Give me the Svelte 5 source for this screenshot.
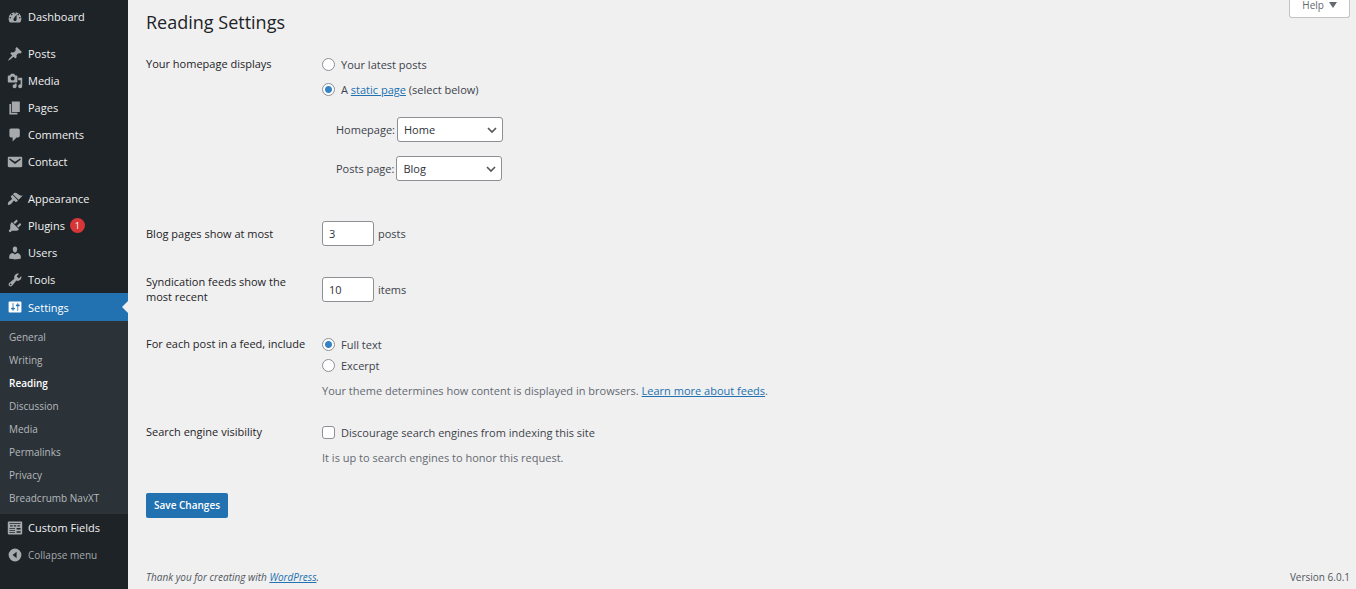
<script lang="ts">
	type MenuItem = {
		label: string;
		icon: string;
		count?: number;
		current?: boolean;
		gap?: boolean;
	};

	const icons: Record<string, string> = {
		dashboard: 'M3.76 17h12.48A7.98 7.98 0 0 0 18 12a8 8 0 0 0-16 0c0 1.9.66 3.65 1.76 5zM10 4c.55 0 1 .45 1 1s-.45 1-1 1-1-.45-1-1 .45-1 1-1zM6 6c.55 0 1 .45 1 1s-.45 1-1 1-1-.45-1-1 .45-1 1-1zm8 0c.55 0 1 .45 1 1s-.45 1-1 1-1-.45-1-1 .45-1 1-1zm-5.37 5.55L12 7v6c0 1.1-.9 2-2 2s-2-.9-2-2c0-.57.24-1.08.63-1.45zM4 10c.55 0 1 .45 1 1s-.45 1-1 1-1-.45-1-1 .45-1 1-1zm12 0c.55 0 1 .45 1 1s-.45 1-1 1-1-.45-1-1 .45-1 1-1z',
		post: 'M10.44 3.02l1.82-1.82 6.36 6.35-1.83 1.82c-1.05-.68-2.48-.57-3.41.36l-.75.75c-.92.93-1.04 2.35-.35 3.41l-1.83 1.82-2.41-2.41-2.8 2.79c-.42.42-3.38 2.71-3.8 2.29s1.86-3.39 2.28-3.81l2.79-2.79L4.1 9.36l1.83-1.82c1.05.69 2.48.57 3.4-.36l.75-.75c.93-.92 1.05-2.35.36-3.41z',
		media: 'M13 11V4c0-.55-.45-1-1-1h-1.67L9 1H5L3.67 3H2c-.55 0-1 .45-1 1v7c0 .55.45 1 1 1h10c.55 0 1-.45 1-1zM7 4.5c1.38 0 2.5 1.12 2.5 2.5S8.38 9.5 7 9.5 4.5 8.38 4.5 7 5.62 4.5 7 4.5zM14 6h5v10.5c0 1.38-1.12 2.5-2.5 2.5S14 17.88 14 16.5s1.12-2.5 2.5-2.5c.17 0 .34.02.5.05V9h-3V6zm-4 8.05V13h2v3.5c0 1.38-1.12 2.5-2.5 2.5S7 17.88 7 16.5 8.12 14 9.5 14c.17 0 .34.02.5.05z',
		page: 'M6 15V2h10v13H6zm-1 1h8v2H3V5h2v11z',
		comments: 'M5 2h9c1.1 0 2 .9 2 2v7c0 1.1-.9 2-2 2h-2l-5 5v-5H5c-1.1 0-2-.9-2-2V4c0-1.1.9-2 2-2z',
		email: 'M2.5 3.5h15c.8 0 1.5.7 1.5 1.5v10c0 .8-.7 1.5-1.5 1.5h-15C1.7 16.5 1 15.8 1 15V5c0-.8.7-1.5 1.5-1.5zm7.5 9.1l6.9-5.5c.3-.3.4-.7.1-1.1-.3-.4-.8-.4-1.2-.2L10 9.7 4.2 5.8c-.4-.2-.9-.2-1.2.2-.3.4-.2.8.1 1.1z',
		appearance: 'M14.48 11.06L7.41 3.99l1.5-1.5c.5-.56 2.3-.47 3.51.32 1.21.8 1.43 1.28 2.91 2.1 1.18.64 2.45 1.26 4.45.85zm-.71.71L6.7 4.7 4.93 6.47c-.39.39-.39 1.02 0 1.41l1.06 1.06c.39.39.39 1.03 0 1.42-.6.6-1.43 1.11-2.21 1.69-.35.26-.7.53-1.01.84C1.43 14.23.4 16.08 1.4 17.07c.99 1 2.84-.03 4.18-1.36.31-.31.58-.66.85-1.02.57-.78 1.08-1.61 1.69-2.21.39-.39 1.02-.39 1.41 0l1.06 1.06c.39.39 1.02.39 1.41 0z',
		plugins: 'M13.11 4.36L9.87 7.6 8 5.73l3.24-3.24c.35-.34 1.05-.2 1.56.32.52.51.66 1.21.31 1.55zm-8 1.77l.91-1.12 9.01 9.01-1.19.84c-.71.71-2.63 1.16-3.82 1.16H6.14L4.9 17.26c-.59.59-1.54.59-2.12 0-.59-.58-.59-1.53 0-2.12l1.24-1.24v-3.88c0-1.13.4-3.19 1.09-3.89zm7.26 3.97l3.24-3.24c.34-.35 1.04-.21 1.55.31.52.51.66 1.21.31 1.55l-3.24 3.25z',
		users: 'M10 9.25c-2.27 0-2.73-3.44-2.73-3.44C7 4.02 7.82 2 9.97 2c2.16 0 2.98 2.02 2.71 3.81 0 0-.41 3.44-2.68 3.44zm0 2.57L12.72 10c2.39 0 4.52 2.33 4.52 4.53v2.49s-3.65 1.13-7.24 1.13c-3.65 0-7.24-1.13-7.24-1.13v-2.49c0-2.25 1.94-4.48 4.47-4.48z',
		tools: 'M16.68 9.77c-1.34 1.34-3.3 1.67-4.95.99l-5.41 6.52c-.99.99-2.59.99-3.58 0s-.99-2.59 0-3.57l6.52-5.42c-.68-1.65-.35-3.61.99-4.95 1.28-1.28 3.12-1.62 4.72-1.06l-2.89 2.89 2.82 2.82 2.86-2.87c.53 1.58.18 3.39-1.08 4.65zM3.81 16.21c.4.39 1.04.39 1.43 0 .4-.4.4-1.04 0-1.43-.39-.4-1.03-.4-1.43 0-.39.39-.39 1.03 0 1.43z',
		settings: 'M18 16V4c0-.55-.45-1-1-1H3c-.55 0-1 .45-1 1v12c0 .55.45 1 1 1h14c.55 0 1-.45 1-1zM8 11h1c.55 0 1 .45 1 1s-.45 1-1 1H8v1.5c0 .28-.22.5-.5.5s-.5-.22-.5-.5V13H6c-.55 0-1-.45-1-1s.45-1 1-1h1V5.5c0-.28.22-.5.5-.5s.5.22.5.5V11zm5-2h-1c-.55 0-1-.45-1-1s.45-1 1-1h1V5.5c0-.28.22-.5.5-.5s.5.22.5.5V7h1c.55 0 1 .45 1 1s-.45 1-1 1h-1v5.5c0 .28-.22.5-.5.5s-.5-.22-.5-.5V9z',
		fields: 'M2 2h16c.55 0 1 .45 1 1v14c0 .55-.45 1-1 1H2c-.55 0-1-.45-1-1V3c0-.55.45-1 1-1zM3 4v1h14V4zM4 6.5v1.500h3V6.500zM8.500 6.500v1.500h3V6.500zM13 6.500v1.500h3V6.500zM3 10v1h7v-1zM3 12.500v1h7v-1zM3 15v1h7v-1zM12 10v2h5v-2zM12 14v2h5v-2z',
		collapse: 'M10 2a8 8 0 1 0 0 16 8 8 0 0 0 0-16zm2 4v8l-5-4z',
	};

	const menu: MenuItem[] = [
		{ label: 'Dashboard', icon: 'dashboard' },
		{ label: 'Posts', icon: 'post', gap: true },
		{ label: 'Media', icon: 'media' },
		{ label: 'Pages', icon: 'page' },
		{ label: 'Comments', icon: 'comments' },
		{ label: 'Contact', icon: 'email' },
		{ label: 'Appearance', icon: 'appearance', gap: true },
		{ label: 'Plugins', icon: 'plugins', count: 1 },
		{ label: 'Users', icon: 'users' },
		{ label: 'Tools', icon: 'tools' },
		{ label: 'Settings', icon: 'settings', current: true },
		{ label: 'Custom Fields', icon: 'fields' },
	];

	const submenu = ['General', 'Writing', 'Reading', 'Discussion', 'Media', 'Permalinks', 'Privacy', 'Breadcrumb NavXT'];

	let showOnFront = $state('page');
	let homepage = $state('Home');
	let postsPage = $state('Blog');
	let postsPerPage = $state('3');
	let postsPerRss = $state('10');
	let feedContent = $state('full');
	let discourage = $state(false);
</script>

{#snippet icon(name: string)}
	<svg class="icon" viewBox="0 0 20 20" aria-hidden="true">
		<path d={icons[name]} fill="currentColor" fill-rule="evenodd" />
	</svg>
{/snippet}

<div class="admin">
	<nav class="sidebar" aria-label="Main menu">
		<ul class="menu">
			{#each menu as item}
				<li class:gap={item.gap}>
					<a class="menu-link" class:current={item.current} href="#{item.icon}">
						{@render icon(item.icon)}
						<span>{item.label}</span>
						{#if item.count}
							<span class="count">{item.count}</span>
						{/if}
					</a>
					{#if item.current}
						<ul class="submenu">
							{#each submenu as name}
								<li><a class:active={name === 'Reading'} href="#{name}">{name}</a></li>
							{/each}
						</ul>
					{/if}
				</li>
			{/each}
		</ul>
		<button class="collapse" type="button">
			{@render icon('collapse')}
			<span>Collapse menu</span>
		</button>
	</nav>

	<div class="content">
		<header>
			<h1>Reading Settings</h1>
			<button class="help" type="button">Help <span class="caret"></span></button>
		</header>

		<form onsubmit={(e) => e.preventDefault()}>
			<div class="row front">
				<div class="label" id="front-label">Your homepage displays</div>
				<div class="field" role="radiogroup" aria-labelledby="front-label">
					<label class="choice">
						<input type="radio" name="front" value="posts" bind:group={showOnFront} />
						Your latest posts
					</label>
					<div class="choice">
						<input id="front-page" type="radio" name="front" value="page" bind:group={showOnFront} />
						<label for="front-page">A <a href="#pages">static page</a> (select below)</label>
					</div>
					<div class="pages">
						<div class="pick">
							<label for="homepage">Homepage:</label>
							<select id="homepage" bind:value={homepage}>
								<option>Home</option>
								<option>Blog</option>
							</select>
						</div>
						<div class="pick">
							<label for="posts-page">Posts page:</label>
							<select id="posts-page" bind:value={postsPage}>
								<option>Home</option>
								<option>Blog</option>
							</select>
						</div>
					</div>
				</div>
			</div>

			<div class="row number">
				<label class="label" for="per-page">Blog pages show at most</label>
				<div class="field amount">
					<input id="per-page" type="text" inputmode="numeric" bind:value={postsPerPage} />
					<span>posts</span>
				</div>
			</div>

			<div class="row number">
				<label class="label" for="per-rss">Syndication feeds show the most recent</label>
				<div class="field amount">
					<input id="per-rss" type="text" inputmode="numeric" bind:value={postsPerRss} />
					<span>items</span>
				</div>
			</div>

			<div class="row feed">
				<div class="label" id="feed-label">For each post in a feed, include</div>
				<div class="field" role="radiogroup" aria-labelledby="feed-label">
					<label class="choice">
						<input type="radio" name="feed" value="full" bind:group={feedContent} />
						Full text
					</label>
					<label class="choice">
						<input type="radio" name="feed" value="excerpt" bind:group={feedContent} />
						Excerpt
					</label>
					<p>Your theme determines how content is displayed in browsers. <a href="#feeds">Learn more about feeds</a>.</p>
				</div>
			</div>

			<div class="row">
				<div class="label">Search engine visibility</div>
				<div class="field">
					<label class="choice">
						<input type="checkbox" bind:checked={discourage} />
						Discourage search engines from indexing this site
					</label>
					<p>It is up to search engines to honor this request.</p>
				</div>
			</div>

			<button class="save" type="submit">Save Changes</button>
		</form>

		<footer>
			<em>Thank you for creating with <a href="#wordpress">WordPress</a>.</em>
			<span>Version 6.0.1</span>
		</footer>
	</div>
</div>

<style>
	:global(body) {
		background: #f0f0f0;
	}
	.admin {
		display: flex;
		min-height: 100vh;
		background: #f0f0f0;
		color: #3c434a;
		font: 11px/15px 'Open Sans', 'Noto Sans', sans-serif;
	}
	.admin * {
		box-sizing: border-box;
	}
	ul {
		list-style: none;
		margin: 0;
		padding: 0;
	}
	button,
	input,
	select {
		font: inherit;
		margin: 0;
	}
	a {
		color: #2271b1;
	}

	.sidebar {
		flex: none;
		width: 128px;
		padding-top: 3px;
		background: #1d2327;
	}
	.gap {
		margin-top: 10px;
	}
	.menu-link,
	.collapse {
		display: flex;
		align-items: center;
		gap: 5px;
		width: 100%;
		height: 27px;
		padding: 0 0 0 7px;
		color: #f0f0f1;
		text-decoration: none;
	}
	.icon {
		flex: none;
		width: 16px;
		height: 16px;
		color: #a7aaad;
	}
	.count {
		min-width: 15px;
		border-radius: 8px;
		background: #d63638;
		color: #fff;
		font-size: 9px;
		text-align: center;
	}
	.current {
		position: relative;
		height: 28px;
		background: #2271b1;
		color: #fff;
	}
	.current .icon {
		color: #fff;
	}
	.current::after {
		content: '';
		position: absolute;
		top: 8px;
		right: 0;
		border: 6px solid transparent;
		border-left-width: 0;
		border-right-color: #f0f0f0;
	}
	.submenu {
		padding: 5px 0 4px;
		background: #2c3338;
	}
	.submenu a {
		display: block;
		padding-left: 9px;
		color: #b4b9be;
		font-size: 10px;
		line-height: 23px;
		text-decoration: none;
	}
	.submenu .active {
		color: #fff;
		font-weight: 600;
	}
	.collapse {
		height: 28px;
		border: 0;
		background: none;
		color: #a7aaad;
		font-size: 10px;
	}

	.content {
		flex: 1;
		display: flex;
		flex-direction: column;
		padding: 0 6px 4px 18px;
	}
	header {
		display: flex;
		justify-content: space-between;
		align-items: flex-start;
	}
	h1 {
		margin: 0;
		padding-top: 8px;
		color: #1d2327;
		font-size: 18px;
		font-weight: 400;
		line-height: 28px;
	}
	.help {
		display: flex;
		align-items: center;
		gap: 5px;
		height: 18px;
		padding: 0 12px 8px;
		border: 1px solid #c3c4c7;
		border-top: 0;
		border-radius: 0 0 3px 3px;
		background: #fff;
		color: #646970;
		font-size: 10px;
		line-height: 10px;
	}
	.caret {
		border: 4px solid transparent;
		border-top: 6px solid #646970;
		border-bottom: 0;
	}

	form {
		display: flex;
		flex-direction: column;
		padding-top: 20px;
	}
	.row {
		display: grid;
		grid-template-columns: 160px 1fr;
		column-gap: 16px;
	}
	.front {
		min-height: 162px;
	}
	.number {
		align-items: center;
		min-height: 30px;
		margin-bottom: 26px;
	}
	.feed {
		min-height: 94px;
		padding-top: 6px;
	}
	.label {
		color: #1d2327;
		font-weight: 500;
	}
	.choice {
		display: flex;
		align-items: center;
		gap: 6px;
		width: fit-content;
		height: 17px;
	}
	.choice + .choice {
		margin-top: 4px;
	}
	.front .choice + .choice {
		margin-top: 8px;
	}
	input,
	select {
		border: 1px solid #8c8f94;
		border-radius: 3px;
		background-color: #fff;
		color: #2c3338;
	}
	input[type='radio'],
	input[type='checkbox'] {
		appearance: none;
		flex: none;
		width: 13px;
		height: 13px;
	}
	input[type='radio'] {
		border-radius: 50%;
	}
	input[type='radio']:checked {
		background-image: radial-gradient(circle, #3582c4 3px, transparent 4px);
	}
	input[type='checkbox']:checked {
		background-color: #3582c4;
	}
	.pages {
		display: flex;
		flex-direction: column;
		gap: 14px;
		padding: 19px 0 0 14px;
	}
	.pick {
		display: flex;
		align-items: center;
		gap: 2px;
	}
	select {
		appearance: none;
		width: 106px;
		height: 25px;
		padding: 0 20px 0 6px;
		background-image: url("data:image/svg+xml,%3Csvg xmlns='http://www.w3.org/2000/svg' viewBox='0 0 10 10'%3E%3Cpath d='M1 3l4 4 4-4' fill='none' stroke='%23555' stroke-width='1.6'/%3E%3C/svg%3E");
		background-repeat: no-repeat;
		background-position: right 5px center;
		background-size: 10px 10px;
	}
	.amount {
		display: flex;
		align-items: center;
		gap: 4px;
	}
	.amount input {
		width: 52px;
		height: 25px;
		padding: 0 6px;
	}
	p {
		margin: 9px 0 0;
		color: #646970;
	}
	.save {
		align-self: flex-start;
		height: 25px;
		margin-top: 28px;
		padding: 0 8px;
		border: 0;
		border-radius: 2px;
		background: #2271b1;
		color: #fff;
		font-size: 10px;
		font-weight: 600;
	}

	footer {
		display: flex;
		justify-content: space-between;
		margin-top: auto;
		color: #50575e;
		font-size: 10px;
	}
</style>
